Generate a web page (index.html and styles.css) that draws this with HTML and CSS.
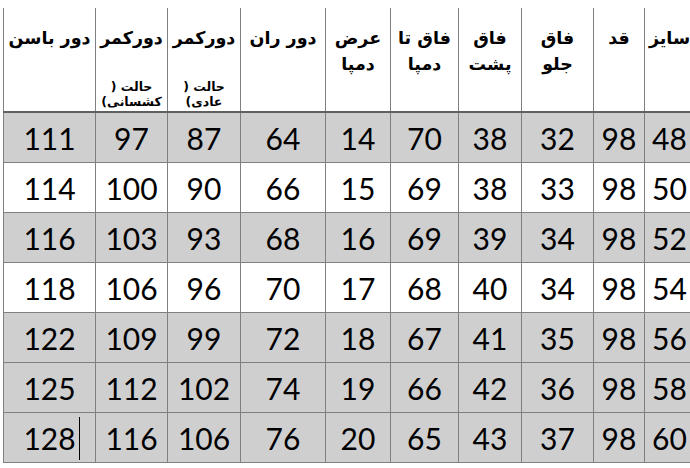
FILE: index.html
```html
<!DOCTYPE html>
<html lang="fa">
<head>
<meta charset="utf-8">
<title>جدول سایز</title>
<link rel="stylesheet" href="styles.css">
</head>
<body>
<table class="sizes" dir="rtl">
  <colgroup>
    <col class="c-size">
    <col class="c-qad">
    <col class="c-jelo">
    <col class="c-posht">
    <col class="c-ta">
    <col class="c-arz">
    <col class="c-ran">
    <col class="c-kamar1">
    <col class="c-kamar2">
    <col class="c-basan">
  </colgroup>
  <thead>
    <tr>
      <th>سایز</th>
      <th>قد</th>
      <th>فاق<br>جلو</th>
      <th>فاق<br>پشت</th>
      <th>فاق تا<br>دمپا</th>
      <th>عرض<br>دمپا</th>
      <th>دور ران</th>
      <th>دورکمر<span class="note">حالت (<br>عادی)</span></th>
      <th>دورکمر<span class="note">حالت (<br>کشسانی)</span></th>
      <th>دور باسن</th>
    </tr>
  </thead>
  <tbody>
    <tr class="shade"><td>48</td><td>98</td><td>32</td><td>38</td><td>70</td><td>14</td><td>64</td><td>87</td><td>97</td><td>111</td></tr>
    <tr><td>50</td><td>98</td><td>33</td><td>38</td><td>69</td><td>15</td><td>66</td><td>90</td><td>100</td><td>114</td></tr>
    <tr class="shade"><td>52</td><td>98</td><td>34</td><td>39</td><td>69</td><td>16</td><td>68</td><td>93</td><td>103</td><td>116</td></tr>
    <tr><td>54</td><td>98</td><td>34</td><td>40</td><td>68</td><td>17</td><td>70</td><td>96</td><td>106</td><td>118</td></tr>
    <tr class="shade"><td>56</td><td>98</td><td>35</td><td>41</td><td>67</td><td>18</td><td>72</td><td>99</td><td>109</td><td>122</td></tr>
    <tr class="shade"><td>58</td><td>98</td><td>36</td><td>42</td><td>66</td><td>19</td><td>74</td><td>102</td><td>112</td><td>125</td></tr>
    <tr class="shade"><td>60</td><td>98</td><td>37</td><td>43</td><td>65</td><td>20</td><td>76</td><td>106</td><td>116</td><td><span class="caret">128</span></td></tr>
  </tbody>
</table>
</body>
</html>
```

FILE: styles.css
```css
html {
  overflow: hidden;
  background: #ffffff;
}

body {
  margin: 8px 0 0 3px;
  background: #ffffff;
}

.sizes {
  border-collapse: collapse;
  table-layout: fixed;
  width: 691px;
  color: #000000;
}

.c-size { width: 50px; }
.c-qad { width: 51px; }
.c-jelo { width: 72px; }
.c-posht { width: 63px; }
.c-ta { width: 68px; }
.c-arz { width: 65px; }
.c-ran { width: 85px; }
.c-kamar1 { width: 73px; }
.c-kamar2 { width: 72px; }
.c-basan { width: 92px; }

.sizes th {
  height: 86px;
  padding: 17px 0 0;
  vertical-align: top;
  text-align: center;
  font-family: "DejaVu Sans", sans-serif;
  font-size: 17.5px;
  font-weight: bold;
  line-height: 26px;
  border-left: 1px solid #808080;
  border-right: 1px solid #808080;
  border-bottom: 2px solid #606060;
  border-top: none;
}

.note {
  display: block;
  margin-top: 28px;
  font-size: 12.5px;
  line-height: 15px;
}

.sizes td {
  height: 49px;
  padding: 0;
  text-align: center;
  vertical-align: middle;
  font-family: Lato, "Open Sans", sans-serif;
  font-size: 30px;
  line-height: 36px;
  border: 1px solid #808080;
  background: #ffffff;
}

.sizes tr.shade td {
  background: #cfcfcf;
}

.caret {
  position: relative;
}

.caret::after {
  content: "";
  position: absolute;
  left: calc(100% + 3px);
  top: 50%;
  margin-top: -21px;
  width: 1px;
  height: 43px;
  background: #000000;
}
```
